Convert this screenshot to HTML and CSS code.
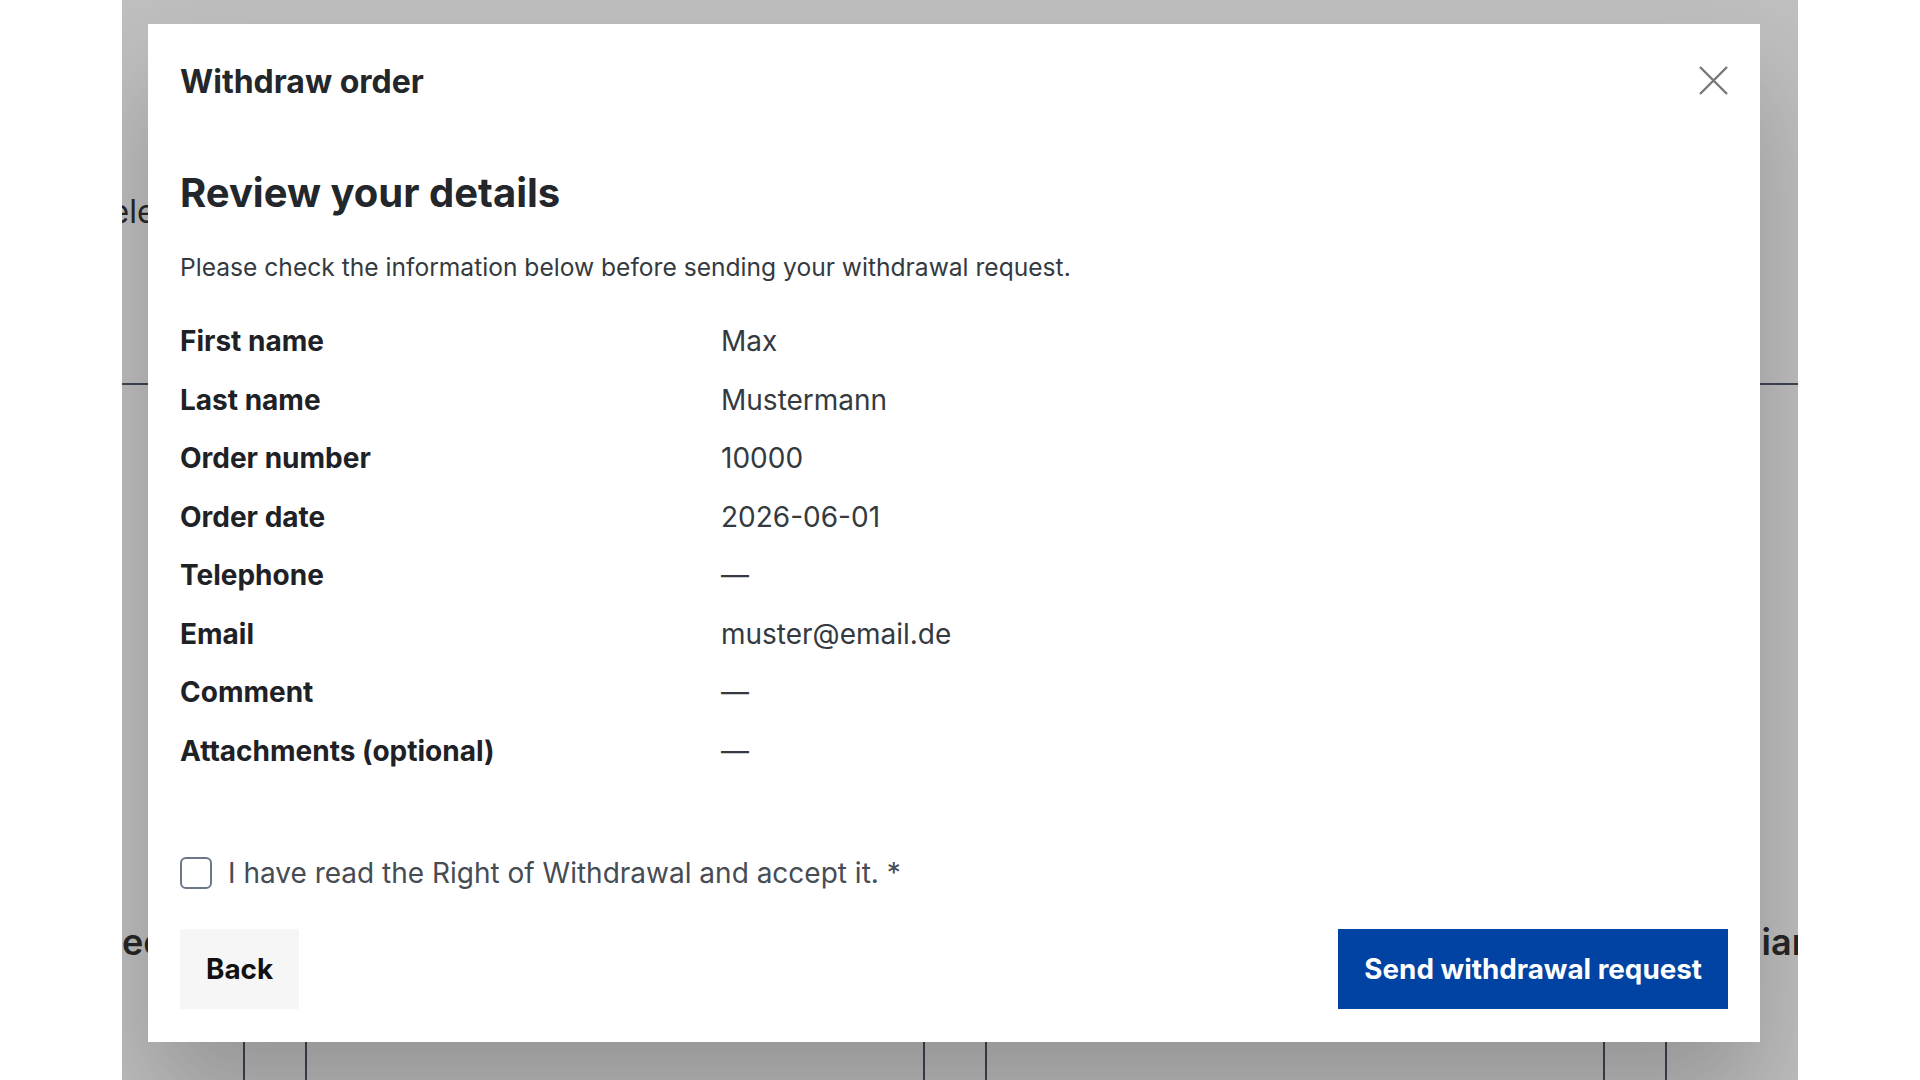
FILE: index.html
```html
<!DOCTYPE html>
<html lang="en">
<head>
    <meta charset="UTF-8">
    <meta name="viewport" content="width=device-width, initial-scale=1.0">
    <title>Withdraw order</title>
    <link rel="stylesheet" href="styles.css">
</head>
<body>

    <div class="stage">
        <!-- Page behind the dialog -->
        <div class="page">
            <div class="page-top">
                <div class="page-label">Select items</div>
            </div>
            <div class="page-heads">
                <span class="page-head head-left">Spec</span>
                <span class="page-head head-right">Auxiliary</span>
            </div>
            <div class="page-table">
                <div class="page-col"><div class="page-cell"></div></div>
                <div class="page-col"><div class="page-cell"></div></div>
                <div class="page-col"><div class="page-cell"></div></div>
            </div>
        </div>

        <div class="overlay">
            <div class="modal" role="dialog" aria-labelledby="modalTitle">
                <div class="modal-header">
                    <h1 id="modalTitle">Withdraw order</h1>
                    <button class="close-btn" aria-label="Close">
                        <svg width="29" height="29" viewBox="0 0 29 29">
                            <path d="M1 1 L28 28 M28 1 L1 28" stroke="#777" stroke-width="2.4" fill="none"/>
                        </svg>
                    </button>
                </div>

                <h2>Review your details</h2>
                <p class="intro">Please check the information below before sending your withdrawal request.</p>

                <dl class="details">
                    <dt>First name</dt><dd>Max</dd>
                    <dt>Last name</dt><dd>Mustermann</dd>
                    <dt>Order number</dt><dd>10000</dd>
                    <dt>Order date</dt><dd>2026-06-01</dd>
                    <dt>Telephone</dt><dd>—</dd>
                    <dt>Email</dt><dd>muster@email.de</dd>
                    <dt>Comment</dt><dd>—</dd>
                    <dt>Attachments (optional)</dt><dd>—</dd>
                </dl>

                <label class="accept">
                    <input type="checkbox" id="accept">
                    <span>I have read the Right of Withdrawal and accept it. *</span>
                </label>

                <div class="modal-footer">
                    <button class="btn btn-back">Back</button>
                    <button class="btn btn-send">Send withdrawal request</button>
                </div>
            </div>
        </div>
    </div>

</body>
</html>
```

FILE: styles.css
```css
body {
    margin: 0;
    background-color: #fff;
    font-family: Inter, "Noto Sans", sans-serif;
}
.stage {
    position: relative;
    width: 1676px;
    height: 1080px;
    margin-left: 122px;
    overflow: hidden;
    background-color: #fff;
}

/* page under the dialog */
.page {
    color: #333;
}
.page-top {
    height: 385px;
    border-bottom: 2px solid #525c6b;
    padding-top: 192px;
    box-sizing: border-box;
}
.page-label {
    font-size: 32px;
    line-height: 40px;
    margin-left: -32px;
}
.page-heads {
    display: grid;
    grid-template-columns: 1552px 1fr;
    margin-top: 535px;
}
.page-head {
    font-size: 36px;
    font-weight: 600;
    line-height: 44px;
    white-space: nowrap;
}
.head-left {
    margin-left: -46px;
}
.page-table {
    display: flex;
    margin-left: 121px;
    height: 200px;
}
.page-col {
    width: 680px;
    flex-shrink: 0;
    box-sizing: border-box;
    border-left: 2px solid #525c6b;
}
.page-cell {
    width: 62px;
    height: 100%;
    box-sizing: border-box;
    border-right: 2px solid #525c6b;
}

/* dialog */
.overlay {
    position: absolute;
    inset: 0;
    display: flex;
    padding: 24px 38px 38px 26px;
    background-color: rgba(0, 0, 0, 0.25);
}
.modal {
    flex: 1;
    display: flex;
    flex-direction: column;
    background-color: #fff;
    padding: 38px 32px 33px 32px;
    box-shadow: 0 60px 100px rgba(0, 0, 0, 0.22);
}
.modal-header {
    display: flex;
    justify-content: space-between;
    align-items: flex-start;
}
h1 {
    margin: 0;
    font-size: 32px;
    line-height: 40px;
    font-weight: 700;
    color: #23272b;
}
.close-btn {
    border: none;
    background: none;
    padding: 0;
    margin-top: 4px;
    width: 29px;
    height: 29px;
    cursor: pointer;
}
.close-btn svg {
    display: block;
}
h2 {
    margin: 67px 0 0;
    font-size: 40px;
    line-height: 48px;
    font-weight: 700;
    color: #23272b;
}
.intro {
    margin: 34px 0 0;
    font-size: 24.6px;
    line-height: 32px;
    color: #343a40;
}
.details {
    display: grid;
    grid-template-columns: 541px 1fr;
    row-gap: 22.5px;
    margin: 40px 0 0;
    font-size: 28px;
    line-height: 36px;
}
.details dt {
    font-weight: 700;
    color: #1e2125;
}
.details dd {
    margin: 0;
    color: #343a40;
}
.accept {
    display: flex;
    align-items: center;
    gap: 16px;
    margin-top: 88px;
    font-size: 28px;
    line-height: 32px;
    color: #464c53;
    cursor: pointer;
}
.accept input {
    appearance: none;
    margin: 0;
    width: 32px;
    height: 32px;
    border: 2px solid #6c7888;
    border-radius: 6px;
    background-color: #fff;
}
.modal-footer {
    display: flex;
    justify-content: space-between;
    margin-top: auto;
}
.btn {
    height: 80px;
    padding: 0 26px;
    border: none;
    border-radius: 0;
    font-family: inherit;
    font-size: 27.8px;
    font-weight: 700;
    cursor: pointer;
}
.btn-back {
    background-color: #f6f6f6;
    color: #111;
}
.btn-send {
    background-color: #0043a3;
    color: #fff;
}
```
